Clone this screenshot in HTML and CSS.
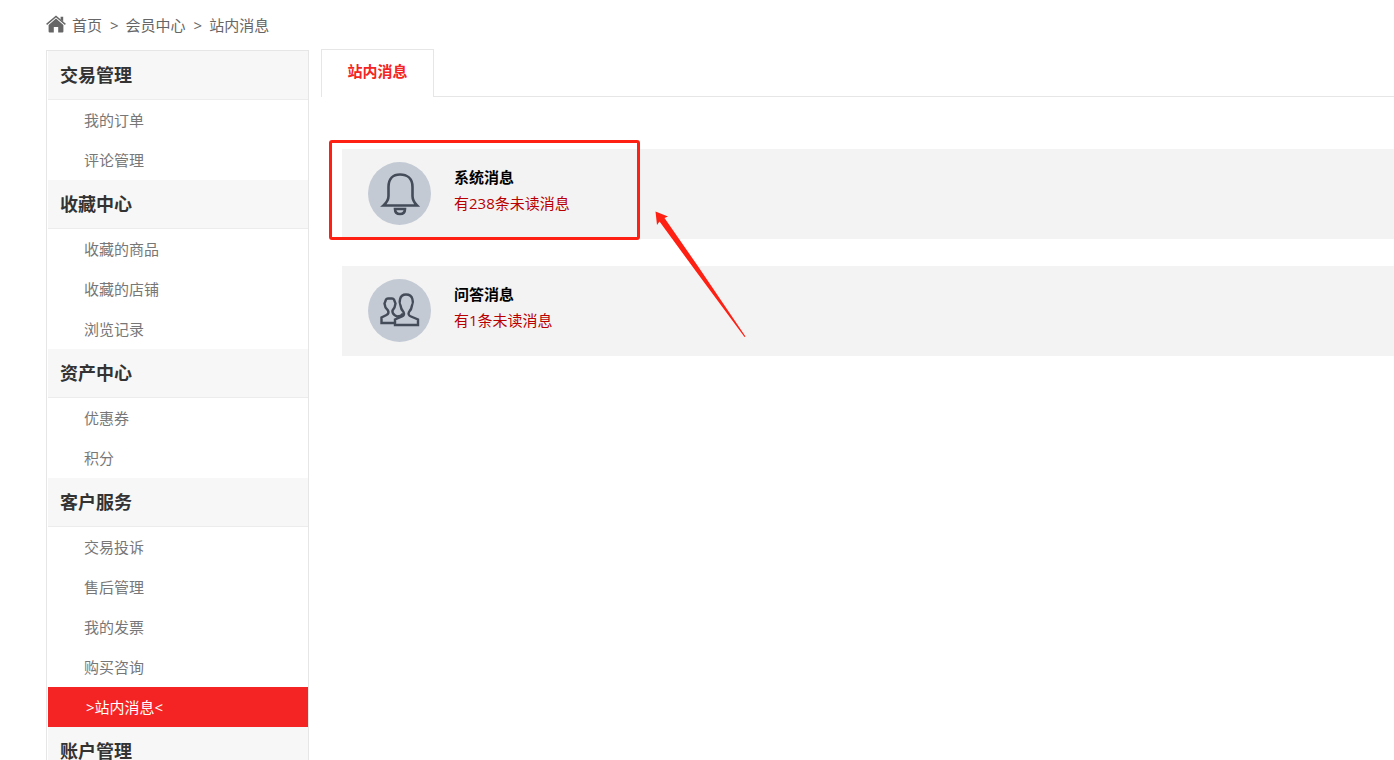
FILE: index.html
```
<!DOCTYPE html>
<html lang="zh-CN">
<head>
    <meta charset="UTF-8">
    <meta name="viewport" content="width=device-width, initial-scale=1.0">
    <title>站内消息</title>
    <link rel="stylesheet" href="styles.css">
</head>
<body>
    <!-- 面包屑 -->
    <nav class="crumbs">
        <svg class="home" viewBox="0 0 20 18" width="20" height="18">
            <path d="M0.6 9.4 L10 1.4 L19.4 9.4" fill="none" stroke="#666" stroke-width="1.4"/>
            <path d="M14.6 1.8 H17.2 V6.6 L14.6 4.4 Z" fill="#666"/>
            <path d="M10 3.6 L17.4 10 V16.5 Q17.4 17.5 16.4 17.5 H12.2 V12 H7.8 V17.5 H3.6 Q2.6 17.5 2.6 16.5 V10 Z" fill="#666"/>
        </svg>
        <a href="#">首页</a>
        <span class="sep">&gt;</span>
        <a href="#">会员中心</a>
        <span class="sep">&gt;</span>
        <a href="#">站内消息</a>
    </nav>

    <div class="wrap">
        <!-- 左侧菜单 -->
        <aside class="sidebar">
            <h3>交易管理</h3>
            <ul>
                <li><a href="#">我的订单</a></li>
                <li><a href="#">评论管理</a></li>
            </ul>
            <h3>收藏中心</h3>
            <ul>
                <li><a href="#">收藏的商品</a></li>
                <li><a href="#">收藏的店铺</a></li>
                <li><a href="#">浏览记录</a></li>
            </ul>
            <h3>资产中心</h3>
            <ul>
                <li><a href="#">优惠券</a></li>
                <li><a href="#">积分</a></li>
            </ul>
            <h3>客户服务</h3>
            <ul>
                <li><a href="#">交易投诉</a></li>
                <li><a href="#">售后管理</a></li>
                <li><a href="#">我的发票</a></li>
                <li><a href="#">购买咨询</a></li>
                <li><a href="#" class="active">&gt;站内消息&lt;</a></li>
            </ul>
            <h3>账户管理</h3>
        </aside>

        <!-- 右侧内容 -->
        <main class="content">
            <div class="tabs">
                <a href="#" class="tab">站内消息</a>
            </div>
            <div class="messages">
                <a href="#" class="message">
                    <svg class="icon" viewBox="0 0 63 63" width="63" height="63">
                        <circle cx="31.5" cy="31.5" r="31.5" fill="#c3cad4"/>
                        <path d="M15.5 43.5 Q20.5 39 20.5 34 V25 C20.500 16.500 25 12.500 32 12.500 S44.500 16.500 44.500 25 V34 Q44.500 39 49 43.500 Z" fill="none" stroke="#454c59" stroke-width="2.6"/>
                        <path d="M27 47 H37 C37 50.500 35 52 32 52 S27 50.500 27 47 Z" fill="none" stroke="#454c59" stroke-width="2.6"/>
                    </svg>
                    <div class="text">
                        <strong>系统消息</strong>
                        <span>有238条未读消息</span>
                    </div>
                </a>
                <a href="#" class="message">
                    <svg class="icon" viewBox="0 0 63 63" width="63" height="63">
                        <circle cx="31.5" cy="31.5" r="31.5" fill="#c3cad4"/>
                        <g fill="none" stroke="#454c59" stroke-width="2.4">
                            <path d="M27 44 H13.500 V38.500 L18.500 36 Q21.500 34.500 20 31.500 L17.500 28.500 L16.500 24.500 L18 20.500 Q18.500 19.500 20 19.500 H24 Q25.500 19.500 26 20.500 L27.500 24.500 L26.500 28.500 L24.500 31.500 Q24 34 26.500 36 L29 37.500 Q33.500 37.500 35 34.500"/>
                            <path d="M27 46 V40.500 L34 37.500 Q37 36 35.500 33 Q33 30.500 32.500 26.500 Q31 23.500 32 20.500 Q33 15.500 38 15.500 Q43.500 15.500 44.500 20.500 Q45.500 23.500 44 26.500 Q43.500 30.500 41 33 Q39.500 36 43 37.500 L50 40.500 V46 Z"/>
                        </g>
                    </svg>
                    <div class="text">
                        <strong>问答消息</strong>
                        <span>有1条未读消息</span>
                    </div>
                </a>
                <div class="mark"></div>
                <svg class="arrow" viewBox="0 0 92 128" width="92" height="128">
                    <path d="M0.500 0.500 L13 5.500 L9.500 7 L43.500 56 L90.500 125.500 L89.500 126 L38.500 57 L4.500 10.500 L2 14 Z" fill="#ff2014"/>
                </svg>
            </div>
        </main>
    </div>
</body>
</html>
```
FILE: styles.css
```
* {
    box-sizing: border-box;
}
body {
    margin: 0;
    height: 100vh;
    overflow: hidden;
    padding-left: 46px;
    background-color: #fff;
    color: #666;
    font-family: "Open Sans", "Noto Sans CJK SC", sans-serif;
    font-size: 15px;
}
a {
    color: inherit;
    text-decoration: none;
}
.crumbs {
    display: flex;
    align-items: center;
    height: 50px;
    line-height: 20px;
}
.home {
    margin-right: 6px;
    margin-bottom: 2px;
}
.sep {
    margin: 0 7px 0 8px;
}
.wrap {
    display: flex;
    align-items: flex-start;
}
.sidebar {
    flex: none;
    width: 263px;
    padding-left: 1px;
    border: 1px solid #e6e6e6;
}
.sidebar h3 {
    margin: 0;
    padding-left: 12px;
    height: 49px;
    line-height: 48px;
    font-size: 18px;
    color: #333;
    background-color: #f7f7f7;
    border-bottom: 1px solid #ececec;
}
.sidebar ul {
    margin: 0;
    padding: 0;
    list-style: none;
}
.sidebar li a {
    display: block;
    padding-left: 36px;
    line-height: 40px;
    color: #777;
}
.sidebar li .active {
    padding-left: 38px;
    color: #fff;
    background-color: #f52424;
}
.content {
    flex: 1;
    margin-left: 12px;
    margin-top: -1px;
}
.tabs {
    display: flex;
    height: 48px;
}
.tabs::after {
    content: "";
    flex: 1;
    border-bottom: 1px solid #e6e6e6;
}
.tab {
    width: 113px;
    line-height: 42px;
    text-align: center;
    font-weight: bold;
    color: #f52424;
    border: 1px solid #e6e6e6;
    border-bottom: none;
}
.messages {
    position: relative;
    display: flex;
    flex-direction: column;
    gap: 27px;
    padding: 52px 0 0 21px;
}
.message {
    display: flex;
    align-items: center;
    gap: 23px;
    height: 90px;
    padding: 0 0 2px 26px;
    background-color: #f3f3f3;
}
.text {
    display: flex;
    flex-direction: column;
    line-height: 26px;
    padding-bottom: 6px;
}
.text strong {
    color: #000;
}
.text span {
    color: #b90000;
}
/* 红框和箭头 */
.mark {
    position: absolute;
    left: 8px;
    top: 43px;
    width: 311px;
    height: 100px;
    border: 3px solid #ff2014;
    border-radius: 3px;
}
.arrow {
    position: absolute;
    left: 334px;
    top: 114px;
}
```
